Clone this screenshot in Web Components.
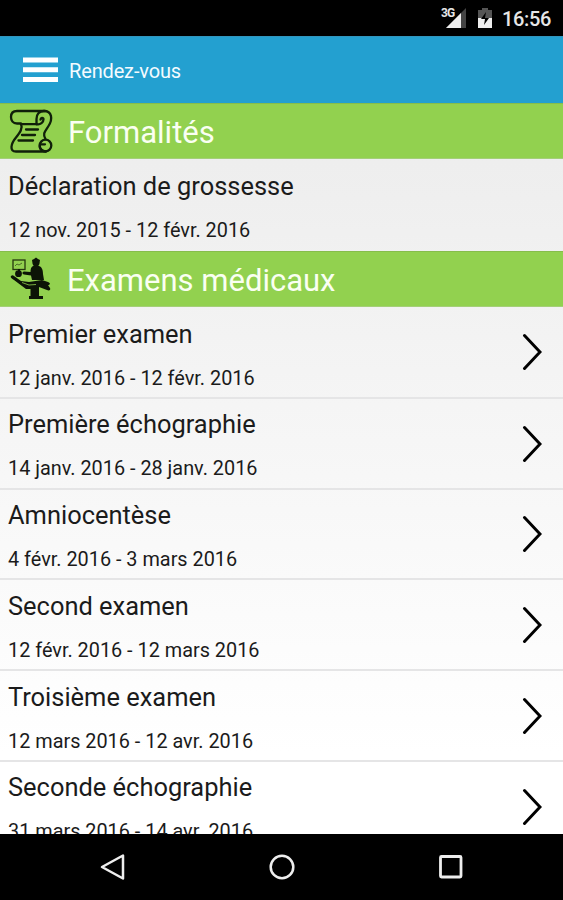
<!DOCTYPE html>
<html lang="fr"><head><meta charset="utf-8"><title>Rendez-vous</title>
<style>html,body{margin:0;height:100%;overflow:hidden;background:#000}</style></head>
<body><appointments-app></appointments-app>
<script>
const define = (name, html) => customElements.define(name, class extends HTMLElement {
  constructor() {
    super();
    const t = document.createElement('template');
    t.innerHTML = html;
    this.attachShadow({mode: 'open'}).append(t.content.cloneNode(true));
  }
});

define('status-bar', `<style>
:host{display:flex;height:36px;flex:none;background:#000;align-items:center;justify-content:flex-end;padding-right:12px;box-sizing:border-box;color:#e6e6e6}
svg{display:block;flex:none}
span{font:500 20px/36px Roboto,sans-serif;padding-top:2px;width:49px;white-space:nowrap;letter-spacing:-.35px}
.net{display:grid;margin-right:11px}.net>*{grid-area:1/1}
.net b{font:700 12px/12px Roboto,sans-serif;letter-spacing:-.9px;margin:7px 0 0 1px}
</style>
<div class="net"><svg width="27" height="36" viewBox="0 0 27 36"><path d="M6 28 26 8v20z" fill="#444"/><path d="M6 28 21 13v15z" fill="#eee"/></svg><b>3G</b></div>
<svg width="14" height="36" viewBox="0 0 14 36" style="margin-right:10px"><path d="M0 10h4V8h6v2h4v18H0z" fill="#555"/><path d="M0 18h14v10H0z" fill="#eee"/><path d="m8 12-5 7h4l-1 6 5-7H7z" fill="#000"/></svg>
<span>16:56</span>`);

define('app-header', `<style>
:host{display:flex;height:67px;flex:none;align-items:center;background:#23a0d0;color:#f4fbff;padding:0 0 0 23px;box-sizing:border-box;font:20px/24px Roboto,sans-serif;letter-spacing:-.15px;border-top:1px solid #3295bd}
svg{margin-right:11px}span{padding-top:1px}
</style><svg width="35" height="26" viewBox="0 0 35 26"><path d="M0 .5h35v5H0zM0 10.3h35v5H0zM0 20h35v5H0z" fill="#fff"/></svg><span><slot></slot></span>`);

define('section-heading', `<style>
:host{display:flex;height:56px;flex:none;align-items:center;background:#92d14f;color:#fafff2;font:31px/56px Roboto,sans-serif;padding-left:8px;box-sizing:border-box;border-top:1px solid #86bd4b;border-bottom:1px solid #a4cf78}
::slotted(*){flex:none;width:46px;height:46px}
.t{margin-left:var(--gap,14px);padding-top:3px;white-space:nowrap}
</style><slot name="icon"></slot><span class="t"><slot></slot></span>`);

define('scroll-icon', `<style>:host{display:block}svg{display:block}</style>
<svg width="46" height="46" viewBox="0 0 46 46" fill="none" stroke="#10200a" stroke-width="2.300" stroke-linecap="round" stroke-linejoin="round">
<path d="M37 3H9C5 3 3 5.500 3 9s2 6.500 6 6.500h4c2 5-1 9-5 14-5 6-7 14 0 14h30"/>
<path d="M13 16.200h15.500"/>
<path d="M28.500 16.200V11c0-5 3-8 7.500-8 8 0 9 8 4.500 15-4 6-6 8-3 13"/>
<path d="M28.500 16.200c4 1 7-2 7-5 0-2-3-1.500-3 .5"/>
<circle cx="37.500" cy="37.500" r="5.800"/><path d="M38 43.300c-6 0-7-4-6-7h5"/>
<path d="M18 21.500h12M14 27h13M10.500 32.500h14.500"/></svg>`);

define('exam-icon', `<style>:host{display:block}svg{display:block}</style>
<svg width="46" height="46" viewBox="0 0 46 46" fill="#0c1406">
<rect x="5" y="4" width="12" height="9.500" fill="none" stroke="#26380f" stroke-width="1.300"/><path d="m7 10 2-2 2 1 3-2" fill="none" stroke="#4b6b27"/><path d="M10 13h2v3h-2z"/>
<circle cx="10.500" cy="17.700" r="3.400"/>
<path d="m24 4 2-1 2-1.500 2 1.500 2 1-.6 4c-1 3.500-5.800 3.500-6.800 0z"/>
<path d="M25 10h6c3 1 4 4 4 8l1 6H24l-1-4.500-7-1c-2 0-2-3 0-3l6.500.5c0-3 .5-5 2.500-6z"/>
<path d="M3 20c1-1 2-1 3 0l7 5 8 1 13-2 6 2c3 1 2 3 0 3l2 3c1 2-1 3-3 2l-8-3-3 2H18L6 24c-2-1-4-3-3-4z"/>
<path d="M14 26.500l7 2.500 7-.5" fill="none" stroke="#92d14f" stroke-width=".8"/>
<path d="M22.500 30h8.500v10h4v3H21v-3h1.500z"/></svg>`);

define('appointment-row', `<style>
:host{display:flex;height:90.750px;flex:none;box-sizing:border-box;padding:0 21px 0 8px;align-items:center;justify-content:space-between;border-bottom:2px solid #e5e5e6;color:#1b1b1b;font-family:Roboto,sans-serif}
:host([last]){border-bottom:0;height:92px}
:host([first]){height:91.750px}
:host(:not([first],[last])) .c{margin-top:-1px}
.c{display:flex;flex-direction:column;align-self:flex-start;white-space:nowrap}
.t{font-size:25.450px;line-height:30px;margin-top:11.500px}
.d{font-size:19.850px;line-height:24px;margin-top:18px}
svg{display:none;margin-top:1px}:host([link]) svg{display:block}
</style><div class="c"><span class="t"><slot></slot></span><span class="d"><slot name="date"></slot></span></div>
<svg width="20" height="38" viewBox="0 0 20 38"><path d="M2.500 2.500 18 19 2.500 35.500" fill="none" stroke="#000" stroke-width="3" stroke-linecap="round"/></svg>`);

define('nav-bar', `<style>
:host{display:grid;grid-template-columns:repeat(3,169px);justify-content:center;justify-items:center;align-items:center;height:66px;flex:none;background:#000}
svg{display:block}</style>
<svg width="28" height="28" viewBox="0 0 28 28" fill="none" stroke="#eee" stroke-width="2.500" stroke-linejoin="round"><path d="M3 14 24 2.500v23z"/></svg>
<svg width="28" height="28" viewBox="0 0 28 28" fill="none" stroke="#eee" stroke-width="2.500"><circle cx="14" cy="14" r="11.300"/></svg>
<svg width="28" height="28" viewBox="0 0 28 28" fill="none" stroke="#eee" stroke-width="2.800"><rect x="3.500" y="3.500" width="20.500" height="20.500" rx="1"/></svg>`);

define('appointments-app', `<style>
:host{display:flex;flex-direction:column;width:563px;height:900px;overflow:hidden}
main{display:flex;flex-direction:column;flex:1;min-height:0;overflow:hidden;background:linear-gradient(#ececec 0,#eee 60px,#fff 650px)}
</style>
<status-bar></status-bar><app-header>Rendez-vous</app-header>
<main>
<section-heading><scroll-icon slot="icon"></scroll-icon>Formalités</section-heading>
<appointment-row last>Déclaration de grossesse<span slot="date">12 nov. 2015 - 12 févr. 2016</span></appointment-row>
<section-heading style="--gap:13px"><exam-icon slot="icon"></exam-icon>Examens médicaux</section-heading>
<appointment-row link first>Premier examen<span slot="date">12 janv. 2016 - 12 févr. 2016</span></appointment-row>
<appointment-row link>Première échographie<span slot="date">14 janv. 2016 - 28 janv. 2016</span></appointment-row>
<appointment-row link>Amniocentèse<span slot="date">4 févr. 2016 - 3 mars 2016</span></appointment-row>
<appointment-row link>Second examen<span slot="date">12 févr. 2016 - 12 mars 2016</span></appointment-row>
<appointment-row link>Troisième examen<span slot="date">12 mars 2016 - 12 avr. 2016</span></appointment-row>
<appointment-row link>Seconde échographie<span slot="date">31 mars 2016 - 14 avr. 2016</span></appointment-row>
</main><nav-bar></nav-bar>`);
</script></body></html>
